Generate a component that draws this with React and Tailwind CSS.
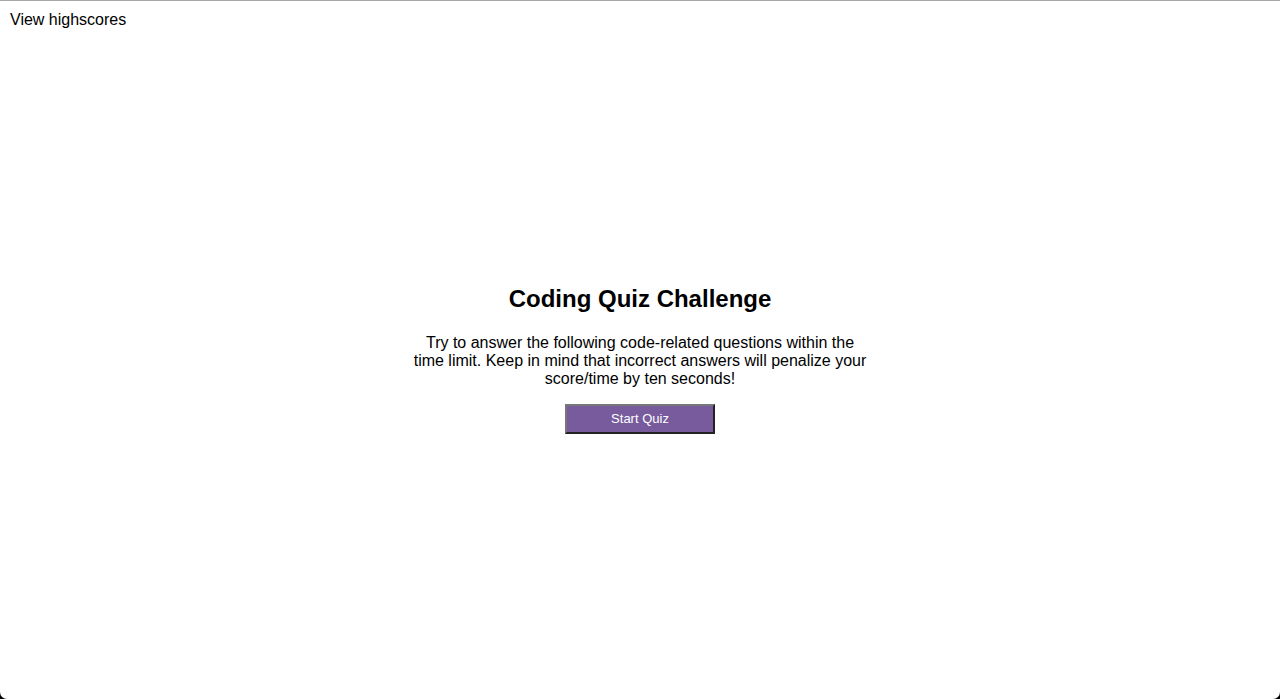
export default function App() {
  return (
    <div className="h-[699px] w-full bg-black overflow-hidden" style={{ fontFamily: '"Liberation Sans", Arial, sans-serif' }}>
      <div className="h-[699px] w-full bg-white rounded-b-[7px] border-t border-[#a6a6a6] flex flex-col text-black">
        <header className="pt-[7px] pl-[10px] text-[16px] leading-normal">View highscores</header>
        <main className="mt-[249px] flex flex-col items-center text-center">
          <h1 className="text-[24px] font-bold leading-normal">Coding Quiz Challenge</h1>
          <p className="mt-[17px] w-[462px] text-[16px] leading-[18px]">
            Try to answer the following code-related questions within the time limit. Keep in mind that incorrect answers will penalize your score/time by ten seconds!
          </p>
          <button className="mt-[16px] w-[150px] h-[30px] bg-[#775b9c] text-white text-[13px] border-2 border-solid border-t-[#777777] border-l-[#777777] border-b-[#222222] border-r-[#222222]">
            Start Quiz
          </button>
        </main>
      </div>
    </div>
  );
}
